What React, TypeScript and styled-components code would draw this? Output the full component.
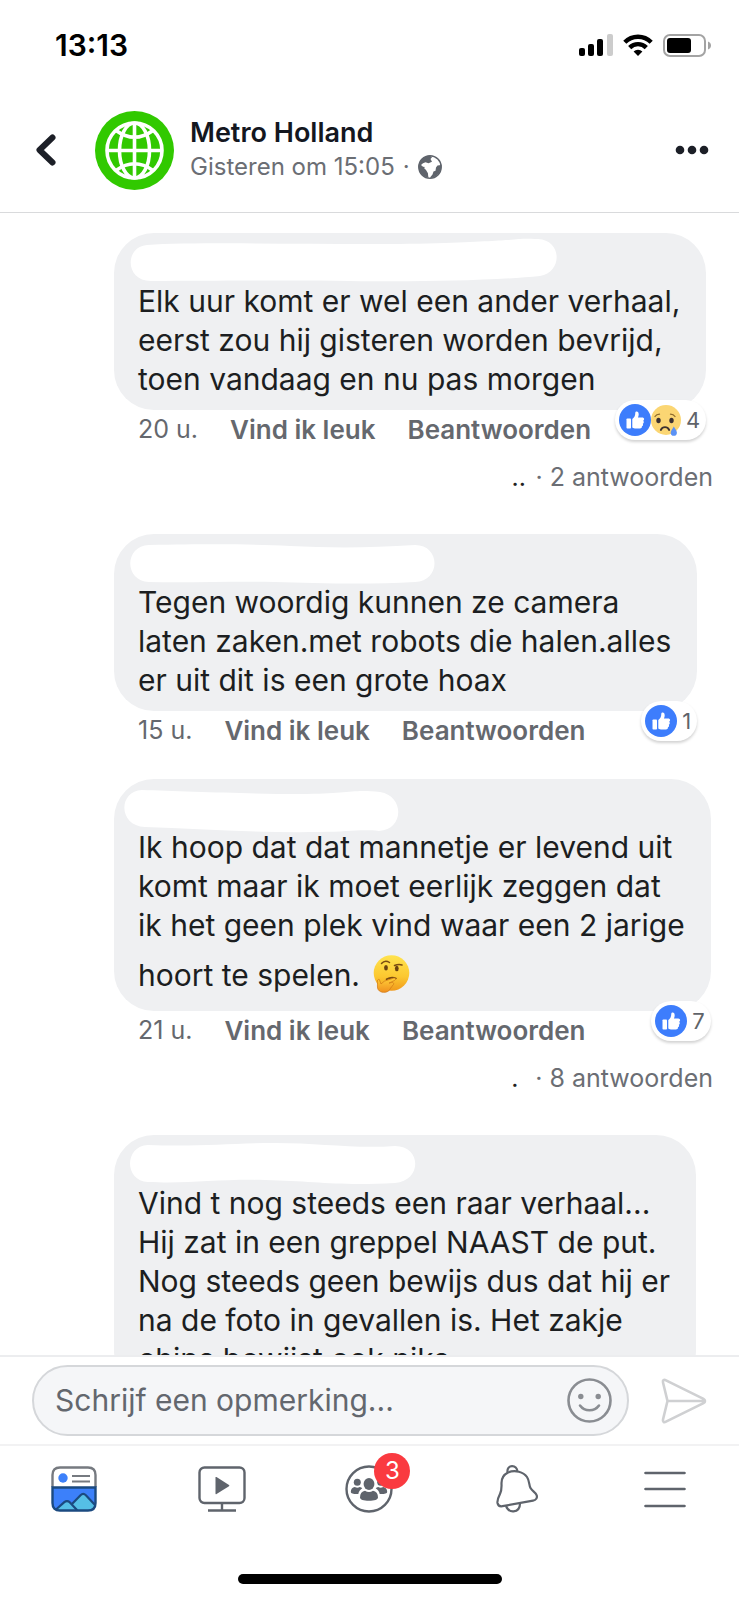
import React from "react";
import styled, { createGlobalStyle } from "styled-components";

const GlobalStyle = createGlobalStyle`
  *, *::before, *::after { box-sizing: border-box; }
  body { margin: 0; background: #fff; }
  body, button, input { font-family: Inter, "Noto Sans", sans-serif; }
  svg { display: block; flex: none; }
`;

const Screen = styled.div`
  display: flex;
  flex-direction: column;
  height: 100vh;
  background: #fff;
  color: #1c1e21;
`;

const StatusBar = styled.div`
  display: flex;
  align-items: center;
  justify-content: space-between;
  height: 90px;
  padding: 0 28px 0 55px;
  flex: none;
`;

const Clock = styled.time`
  font-size: 30px;
  line-height: 36px;
  font-weight: 600;
  color: #000;
`;

const StatusIcons = styled.div`
  display: flex;
  align-items: center;
  gap: 10px;
`;

const IconButton = styled.button`
  display: flex;
  align-items: center;
  justify-content: center;
  padding: 0;
  border: 0;
  background: none;
  flex: none;
  cursor: pointer;
`;

const Header = styled.header`
  display: flex;
  align-items: center;
  height: 123px;
  padding: 0 30px 2px 34px;
  border-bottom: 1px solid #d9dadc;
  flex: none;
`;

const Avatar = styled.div`
  margin-left: 38px;
`;

const Titles = styled.div`
  flex: 1;
  min-width: 0;
  margin-left: 16px;
`;

const PageName = styled.h1`
  margin: 0;
  font-size: 27px;
  line-height: 34px;
  font-weight: 600;
  color: #14171f;
`;

const PostedAt = styled.div`
  display: flex;
  align-items: center;
  gap: 8px;
  font-size: 24px;
  line-height: 34px;
  color: #6b6e74;
`;

const Feed = styled.main`
  flex: 1;
  min-height: 0;
  overflow: hidden;
  padding: 20px 26px 0 114px;
`;

const Comment = styled.article<{ $gap: number }>`
  display: flex;
  flex-direction: column;
  align-items: flex-start;
  margin-bottom: ${(p) => p.$gap}px;
`;

const Thread = styled.div`
  position: relative;
`;

const Bubble = styled.div`
  padding: 8px 26px 11px 24px;
  border-radius: 40px;
  background: #eff0f2;
`;

const HiddenName = styled.div`
  height: 41px;
  margin-left: -14px;

  svg { overflow: visible; }
`;

const CommentText = styled.p`
  margin: 0;
  font-size: 30px;
  line-height: 39px;
  white-space: nowrap;
`;

const Line = styled.span`
  display: block;
`;

const InlineEmoji = styled.svg`
  && { display: inline-block; }
  margin: 10px 0 7px 5px;
  vertical-align: -14px;
`;

const Meta = styled.div`
  display: flex;
  align-items: center;
  gap: 32px;
  padding-left: 24px;
  height: 39px;
  font-size: 25px;
  line-height: 39px;
  color: #65686e;
`;

const Action = styled.button`
  padding: 0;
  border: 0;
  background: none;
  font-size: 26px;
  line-height: 39px;
  font-weight: 600;
  color: #65686e;
  cursor: pointer;
`;

const Reactions = styled.div`
  position: absolute;
  right: 0;
  bottom: 9px;
  display: flex;
  align-items: center;
  height: 40px;
  padding: 0 6px 0 4px;
  border-radius: 20px;
  background: #fff;
  box-shadow: 0 2px 3px rgba(0, 0, 0, 0.18);
  font-size: 22px;
  line-height: 40px;
  color: #606369;
`;

const Count = styled.span`
  margin-left: 5px;
`;

const Replies = styled.div`
  display: flex;
  align-self: flex-end;
  gap: 8px;
  height: 39px;
  margin-top: 9px;
  font-size: 25px;
  line-height: 39px;
  color: #6b6e74;
`;

const Redacted = styled.span`
  min-width: 16px;
  color: #222;
`;

const RepliesLink = styled.a`
  color: inherit;
  text-decoration: none;
`;

const Composer = styled.form`
  display: flex;
  align-items: center;
  gap: 31px;
  height: 89px;
  padding: 0 32px;
  border-top: 2px solid #ecedef;
  flex: none;
`;

const Field = styled.div`
  display: flex;
  align-items: center;
  flex: 1;
  min-width: 0;
  height: 71px;
  padding: 0 15px 0 21px;
  border: 2px solid #d5d7da;
  border-radius: 36px;
  background: #f5f6f8;
`;

const Input = styled.input`
  flex: 1;
  min-width: 0;
  padding: 0;
  border: 0;
  outline: 0;
  background: none;
  font-size: 30px;
  line-height: 39px;

  &::placeholder { color: #63676e; opacity: 1; }
`;

const TabBar = styled.nav`
  display: flex;
  height: 88px;
  border-top: 2px solid #f2f2f3;
  flex: none;
`;

const Tab = styled(IconButton)`
  flex: 1;
`;

const BadgeAnchor = styled.span`
  position: relative;
`;

const Badge = styled.span`
  position: absolute;
  top: -12px;
  right: -17px;
  width: 36px;
  height: 36px;
  border-radius: 50%;
  background: #fa3a40;
  color: #fff;
  font-size: 24px;
  line-height: 36px;
  text-align: center;
`;

const HomeArea = styled.div`
  display: flex;
  align-items: flex-end;
  justify-content: center;
  height: 68px;
  padding-bottom: 16px;
  flex: none;
`;

const HomeIndicator = styled.div`
  width: 264px;
  height: 10px;
  border-radius: 5px;
  background: #000;
`;

const LikeIcon = () => (
  <svg width="32" height="32" viewBox="0 0 32 32" aria-label="Vind ik leuk">
    <circle cx="16" cy="16" r="16" fill="#3d7dfc" />
    <rect x="7.500" y="14.500" width="4.500" height="10" rx="0.800" fill="#fff" />
    <path d="M13.300 15c2-1.200 3-3.400 3-6.200 0-1.700 3.400-2 3.400 1.400 0 1.400-.5 2.700-.8 3.400h4.300c2.200 0 2.500 2.400 1 3.200 1 .9.700 2.500-.4 2.900.6 1 .2 2.200-.9 2.600.3 1.300-.6 2.100-2 2.100h-3.900c-1.500 0-2.600-.4-3.700-1z" fill="#fff" />
  </svg>
);

const SadIcon = () => (
  <svg width="30" height="32" viewBox="0 0 30 32" aria-label="Verdrietig">
    <circle cx="15" cy="16" r="15" fill="#fbd673" />
    <ellipse cx="7.500" cy="16.500" rx="2.200" ry="2.800" fill="#3b3130" />
    <ellipse cx="20.500" cy="16.500" rx="2.200" ry="2.800" fill="#3b3130" />
    <path d="M4 12.500q1.500-2.300 4.500-2.300M24 12.500q-1.500-2.300-4.500-2.300" fill="none" stroke="#8d6a2c" strokeWidth="1.300" strokeLinecap="round" />
    <path d="M9.800 26q1.400-2.800 4.200-2.800t4.200 2.800" fill="none" stroke="#3b3130" strokeWidth="1.800" strokeLinecap="round" />
    <path d="M22.800 22.500c1.700 3 3.100 4.500 3.100 6.200a3.100 3.100 0 0 1-6.200 0c0-1.700 1.500-3.200 3.100-6.200z" fill="#5b92f5" />
  </svg>
);

const ThinkingFace = () => (
  <InlineEmoji width="37" height="38" viewBox="0 0 37 38" role="img" aria-label="denkend gezicht">
    <defs>
      <linearGradient id="face" x1="0" y1="0" x2="0" y2="1">
        <stop offset="0" stopColor="#ffe34f" />
        <stop offset="0.600" stopColor="#fcc830" />
        <stop offset="1" stopColor="#f09a1c" />
      </linearGradient>
      <linearGradient id="hand" x1="0" y1="0" x2="0" y2="1">
        <stop offset="0" stopColor="#ffcf38" />
        <stop offset="1" stopColor="#f0901f" />
      </linearGradient>
    </defs>
    <circle cx="18.500" cy="18" r="17.800" fill="url(#face)" />
    <ellipse cx="13" cy="12.800" rx="1.900" ry="2.700" fill="#6a4210" />
    <ellipse cx="23.800" cy="13.500" rx="1.900" ry="2.700" fill="#6a4210" />
    <path d="M8.500 8.500q3.500-4 8-1M21.500 10.500q4-1.500 7.500-.5" fill="none" stroke="#7a4c12" strokeWidth="1.500" strokeLinecap="round" />
    <path d="M13.500 24.300q5-3 9.500-.8" fill="none" stroke="#7a4c12" strokeWidth="1.600" strokeLinecap="round" />
    <path d="M6.300 24.500c-1.500-.3-2.300 1-1.900 2.800.4 2-.6 5.400.9 7.500 2.400 3.300 8 3.300 10.800.7 1.300-1.300 1.500-3 2.800-4.200 1.600-1.300 2.300-2.600 1.300-3.500-.8-.7-2.500 0-4.200.3l5.600-2.700c1.600-.8 1-2.800-.8-2.300l-9.500 3.100-3.300 2.800z" fill="url(#hand)" stroke="#cf7714" strokeWidth="0.700" />
  </InlineEmoji>
);

const SignalIcon = () => (
  <svg width="34" height="22" viewBox="0 0 34 22" aria-hidden="true">
    <rect x="0" y="14" width="6" height="8" rx="2" fill="#000" />
    <rect x="9" y="10" width="6" height="12" rx="2" fill="#000" />
    <rect x="18" y="5" width="6" height="17" rx="2" fill="#000" />
    <rect x="28" y="0" width="6" height="22" rx="2" fill="#ccc" />
  </svg>
);

const WifiIcon = () => (
  <svg width="30" height="22" viewBox="0 0 30 22" aria-hidden="true">
    <g fill="none" stroke="#000" strokeWidth="4.400">
      <path d="M1.800 8.200a18.700 18.700 0 0 1 26.400 0" />
      <path d="M6.700 13.600a11.700 11.700 0 0 1 16.600 0" />
    </g>
    <path d="M10.600 17.600a6.200 6.200 0 0 1 8.800 0L15 22z" fill="#000" />
  </svg>
);

const BatteryIcon = () => (
  <svg width="48" height="23" viewBox="0 0 48 23" aria-hidden="true">
    <rect x="1" y="1" width="41" height="21" rx="6" fill="none" stroke="#a3a3a3" strokeWidth="2" />
    <rect x="4" y="4" width="24" height="15" rx="3" fill="#000" />
    <path d="M45 7.500q3 1.200 3 4t-3 4z" fill="#a3a3a3" />
  </svg>
);

const BackIcon = () => (
  <svg width="23" height="34" viewBox="0 0 23 34" aria-hidden="true">
    <path d="M18.500 4.500L5.500 17l13 12.500" fill="none" stroke="#1c1f27" strokeWidth="6" strokeLinecap="round" strokeLinejoin="round" />
  </svg>
);

const MetroLogo = () => (
  <svg width="79" height="79" viewBox="0 0 79 79" role="img" aria-label="Metro">
    <circle cx="39.500" cy="39.500" r="39.500" fill="#31c900" />
    <g fill="none" stroke="#fff" strokeWidth="3.600">
      <circle cx="39.500" cy="39.500" r="27.500" />
      <ellipse cx="39.500" cy="39.500" rx="15" ry="27.500" />
      <path d="M39.500 12v55M12 39.500h55M21 19.500q18.500 13.500 37 0M21 59.500q18.500-13.500 37 0" />
    </g>
  </svg>
);

const PublicIcon = () => (
  <svg width="24" height="24" viewBox="0 0 24 24" role="img" aria-label="Openbaar">
    <circle cx="12" cy="12" r="11.200" fill="#fff" stroke="#5f646c" strokeWidth="1.500" />
    <path d="M1.500 7.500C3.500 3 8 .8 12 .8l2 1.500-1.500 1.700 1.500 2.800-3.500 1.400-3-1L5 8.300 3 10l2 1.800 4 .4 2.500 2.600-1.500 2.800.5 5C5 22 .8 17.500.8 12z" fill="#5f646c" />
    <path d="M8.500 10.500l4.500-1.200 2.500 2.700 2.500.5-2.500 4-1.500 4-3 2-1.200-4.500-1.800-3-2-2z" fill="#fff" />
    <path d="M18 12.500l1.500-2 3.700-.5c.5 6-3.200 11.500-9.700 13l-1.500-.5 2.500-3 1-3 2-.7z" fill="#5f646c" />
  </svg>
);

const MoreIcon = () => (
  <svg width="34" height="10" viewBox="0 0 34 10" aria-hidden="true">
    <g fill="#1c1f27">
      <circle cx="5" cy="5" r="4.300" />
      <circle cx="17" cy="5" r="4.300" />
      <circle cx="29" cy="5" r="4.300" />
    </g>
  </svg>
);

const SmileyIcon = () => (
  <svg width="45" height="45" viewBox="0 0 45 45" aria-hidden="true">
    <circle cx="22.500" cy="22.500" r="21" fill="none" stroke="#8a8d92" strokeWidth="2.600" />
    <circle cx="13.800" cy="18.500" r="2.700" fill="#8a8d92" />
    <circle cx="31.200" cy="18.500" r="2.700" fill="#8a8d92" />
    <path d="M13 27.500q3.500 4.800 9.500 4.800t9.500-4.800" fill="none" stroke="#8a8d92" strokeWidth="2.600" strokeLinecap="round" />
  </svg>
);

const SendIcon = () => (
  <svg width="47" height="46" viewBox="0 0 47 46" aria-hidden="true">
    <path d="M7.500 23h37M3 4.500L7.500 23 3 41.500c-.6 2.300 1 3.200 3 2.200l37.500-18.500c2-1 2-3.400 0-4.400L6 2.300C4 1.300 2.400 2.200 3 4.500z" fill="none" stroke="#cfd0d2" strokeWidth="2.600" strokeLinejoin="round" />
  </svg>
);

const FeedIcon = () => (
  <svg width="46" height="46" viewBox="0 0 46 46" aria-hidden="true">
    <path d="M1.500 21V9q0-7.500 7.500-7.500h28q7.500 0 7.500 7.500v12" fill="#fff" stroke="#767a80" strokeWidth="2.400" />
    <path d="M1.500 21.500h43V37q0 7.500-7.500 7.500H9q-7.500 0-7.500-7.500z" fill="#3c80fa" />
    <path d="M20.500 39l9-9.500q2.500-2.500 5 0l10 10q-1.500 5-7.500 5H9q-2.500 0-3.500-1.200l8-6.800q2.500-2 5 0z" fill="#55bfe6" />
    <path d="M5 43.500l8.300-7.300q2.700-2.200 5.400 0l7.500 8M20.500 38.500l9-9.300q2.700-2.500 5.400 0L44 39" fill="none" stroke="#1b4a80" strokeWidth="2.200" />
    <path d="M1.500 21.500h43V37q0 7.500-7.500 7.500H9q-7.500 0-7.500-7.500z" fill="none" stroke="#1b4a80" strokeWidth="2.400" />
    <circle cx="12" cy="12" r="4.700" fill="#3c80fa" />
    <path d="M21 10h18M21 15.500h18" stroke="#767a80" strokeWidth="2.200" />
  </svg>
);

const WatchIcon = () => (
  <svg width="48" height="46" viewBox="0 0 48 46" aria-hidden="true">
    <g fill="none" stroke="#5f646c" strokeWidth="2.400">
      <rect x="1.500" y="1.500" width="45" height="35.500" rx="5" />
      <path d="M24 37v7M10 44.500h28" />
    </g>
    <path d="M17.500 11.500v16q0 1 1 .4L31 20.300q.8-.6 0-1.200l-12.500-8q-1-.6-1 .4z" fill="#5f646c" />
  </svg>
);

const GroupsIcon = () => (
  <svg width="48" height="48" viewBox="0 0 48 48" aria-hidden="true">
    <circle cx="24" cy="24" r="22.500" fill="none" stroke="#5f646c" strokeWidth="2.400" />
    <g fill="#5f646c">
      <ellipse cx="24" cy="19" rx="5.400" ry="6" />
      <path d="M15 32.500c0-4 2-6.300 5-6.800 2.500 1.800 5.500 1.800 8 0 3 .5 5 2.800 5 6.800 0 2-3.500 3.300-9 3.300s-9-1.300-9-3.300z" />
      <circle cx="12.300" cy="17.300" r="3.500" />
      <circle cx="35.700" cy="17.300" r="3.500" />
      <path d="M5.800 27c0-3 1.600-4.700 4-5 1.700 1 3.300 1.100 5 0 1.100.2 1.900.6 2.500 1.300-2.300 1.400-3.500 3.300-4 5.700-4.500.2-7.500-.5-7.500-2zM42.200 27c0-3-1.600-4.700-4-5-1.700 1-3.300 1.100-5 0-1.100.2-1.900.6-2.500 1.300 2.300 1.400 3.500 3.300 4 5.700 4.500.2 7.500-.5 7.500-2z" />
    </g>
  </svg>
);

const BellIcon = () => (
  <svg width="42" height="48" viewBox="0 0 42 48" aria-hidden="true">
    <g fill="none" stroke="#5f646c" strokeWidth="2.200" strokeLinejoin="round">
      <path d="M12 7.500C8 9.500 5.500 13 5.500 18c0 4 .5 7-1.500 11-1.800 3.500-3 5.500-2.500 9 .5 2.700 2.500 3.600 5 3.200l30.500-5.500c3-.6 4.500-2.800 3.700-5.400-.9-2.700-4.500-4.200-6.200-7.300-1.700-3.200-.8-7-3.500-11C27.500 7 19 4.500 12 7.500z" />
      <path d="M11.500 7.500c-.5-4 1.500-6.200 4.500-6.300s5.200 2 5.300 5.300M10 41c1.500 3.700 4 5.500 7.500 5.300 4-.3 6.500-3 6.500-7.800" />
    </g>
  </svg>
);

const MenuIcon = () => (
  <svg width="42" height="37" viewBox="0 0 42 37" aria-hidden="true">
    <path d="M1.500 2h39M1.500 18h39M1.500 35h39" stroke="#5f646c" strokeWidth="2.600" strokeLinecap="round" />
  </svg>
);

type CommentData = {
  mask: string;
  lines: string[];
  emoji?: boolean;
  age?: string;
  sad?: boolean;
  likes?: string;
  replies?: string;
  dots?: string;
  gap: number;
};

const comments: CommentData[] = [
  {
    mask: "M17 4C80 0 230 5 315 2S380-3 408-2c24 1 25 33 2 37-50 5-130 6-190 5S80 40 22 40C-5 41-6 6 17 4z",
    lines: ["Elk uur komt er wel een ander verhaal,", "eerst zou hij gisteren worden bevrijd,", "toen vandaag en nu pas morgen"],
    age: "20 u.",
    sad: true,
    likes: "4",
    replies: "2 antwoorden",
    dots: "..",
    gap: 37,
  },
  {
    mask: "M19 3C80 2 120 2 160 4s80 2 125-1c26 0 26 36 0 37-50 3-100 1-140 0S60 41 19 40C-6 39-6 4 19 3z",
    lines: ["Tegen woordig kunnen ze camera", "laten zaken.met robots die halen.alles", "er uit dit is een grote hoax"],
    age: "15 u.",
    likes: "1",
    gap: 29,
  },
  {
    mask: "M12 3C50 4 120 7 170 7s50-5 80-2c25 4 24 38-1 39-20-2-30 1-60 1-60 1-120-3-174-5C-12 39-12 4 12 3z",
    lines: ["Ik hoop dat dat mannetje er levend uit", "komt maar ik moet eerlijk zeggen dat", "ik het geen plek vind waar een 2 jarige", "hoort te spelen. "],
    emoji: true,
    age: "21 u.",
    likes: "7",
    replies: "8 antwoorden",
    dots: ".",
    gap: 37,
  },
  {
    mask: "M18 2C70 4 100 0 145 0s80 6 120 3c27 0 27 35 0 37-60 3-80-2-130-3S60 41 18 39C-6 38-6 3 18 2z",
    lines: ["Vind t nog steeds een raar verhaal...", "Hij zat in een greppel NAAST de put.", "Nog steeds geen bewijs dus dat hij er", "na de foto in gevallen is. Het zakje", "chips bewijst ook niks."],
    gap: 0,
  },
];

export default function App() {
  return (
    <Screen>
      <GlobalStyle />
      <StatusBar>
        <Clock>13:13</Clock>
        <StatusIcons>
          <SignalIcon />
          <WifiIcon />
          <BatteryIcon />
        </StatusIcons>
      </StatusBar>
      <Header>
        <IconButton type="button" aria-label="Terug"><BackIcon /></IconButton>
        <Avatar><MetroLogo /></Avatar>
        <Titles>
          <PageName>Metro Holland</PageName>
          <PostedAt>
            <span>Gisteren om 15:05</span>
            <span>·</span>
            <PublicIcon />
          </PostedAt>
        </Titles>
        <IconButton type="button" aria-label="Meer"><MoreIcon /></IconButton>
      </Header>
      <Feed>
        {comments.map((c) => (
          <Comment key={c.lines[0]} $gap={c.gap}>
            <Thread>
              <Bubble>
                <HiddenName>
                  <svg width="420" height="44" viewBox="0 0 420 44" aria-hidden="true">
                    <path d={c.mask} transform="translate(6 0)" fill="#fff" />
                  </svg>
                </HiddenName>
                <CommentText>
                  {c.lines.map((line, i) => (
                    <Line key={line}>
                      {line}
                      {c.emoji && i === c.lines.length - 1 && <ThinkingFace />}
                    </Line>
                  ))}
                </CommentText>
              </Bubble>
              {c.age && (
                <Meta>
                  <span>{c.age}</span>
                  <Action type="button">Vind ik leuk</Action>
                  <Action type="button">Beantwoorden</Action>
                </Meta>
              )}
              {c.likes && (
                <Reactions>
                  <LikeIcon />
                  {c.sad && <SadIcon />}
                  <Count>{c.likes}</Count>
                </Reactions>
              )}
            </Thread>
            {c.replies && (
              <Replies>
                <Redacted>{c.dots}</Redacted>
                <RepliesLink href="#">· {c.replies}</RepliesLink>
              </Replies>
            )}
          </Comment>
        ))}
      </Feed>
      <Composer onSubmit={(e) => e.preventDefault()}>
        <Field>
          <Input aria-label="Schrijf een opmerking" placeholder="Schrijf een opmerking..." />
          <IconButton type="button" aria-label="Emoji"><SmileyIcon /></IconButton>
        </Field>
        <IconButton type="submit" aria-label="Verzenden"><SendIcon /></IconButton>
      </Composer>
      <TabBar>
        <Tab type="button" aria-label="Nieuws"><FeedIcon /></Tab>
        <Tab type="button" aria-label="Watch"><WatchIcon /></Tab>
        <Tab type="button" aria-label="Groepen">
          <BadgeAnchor>
            <GroupsIcon />
            <Badge>3</Badge>
          </BadgeAnchor>
        </Tab>
        <Tab type="button" aria-label="Meldingen"><BellIcon /></Tab>
        <Tab type="button" aria-label="Menu"><MenuIcon /></Tab>
      </TabBar>
      <HomeArea><HomeIndicator /></HomeArea>
    </Screen>
  );
}
